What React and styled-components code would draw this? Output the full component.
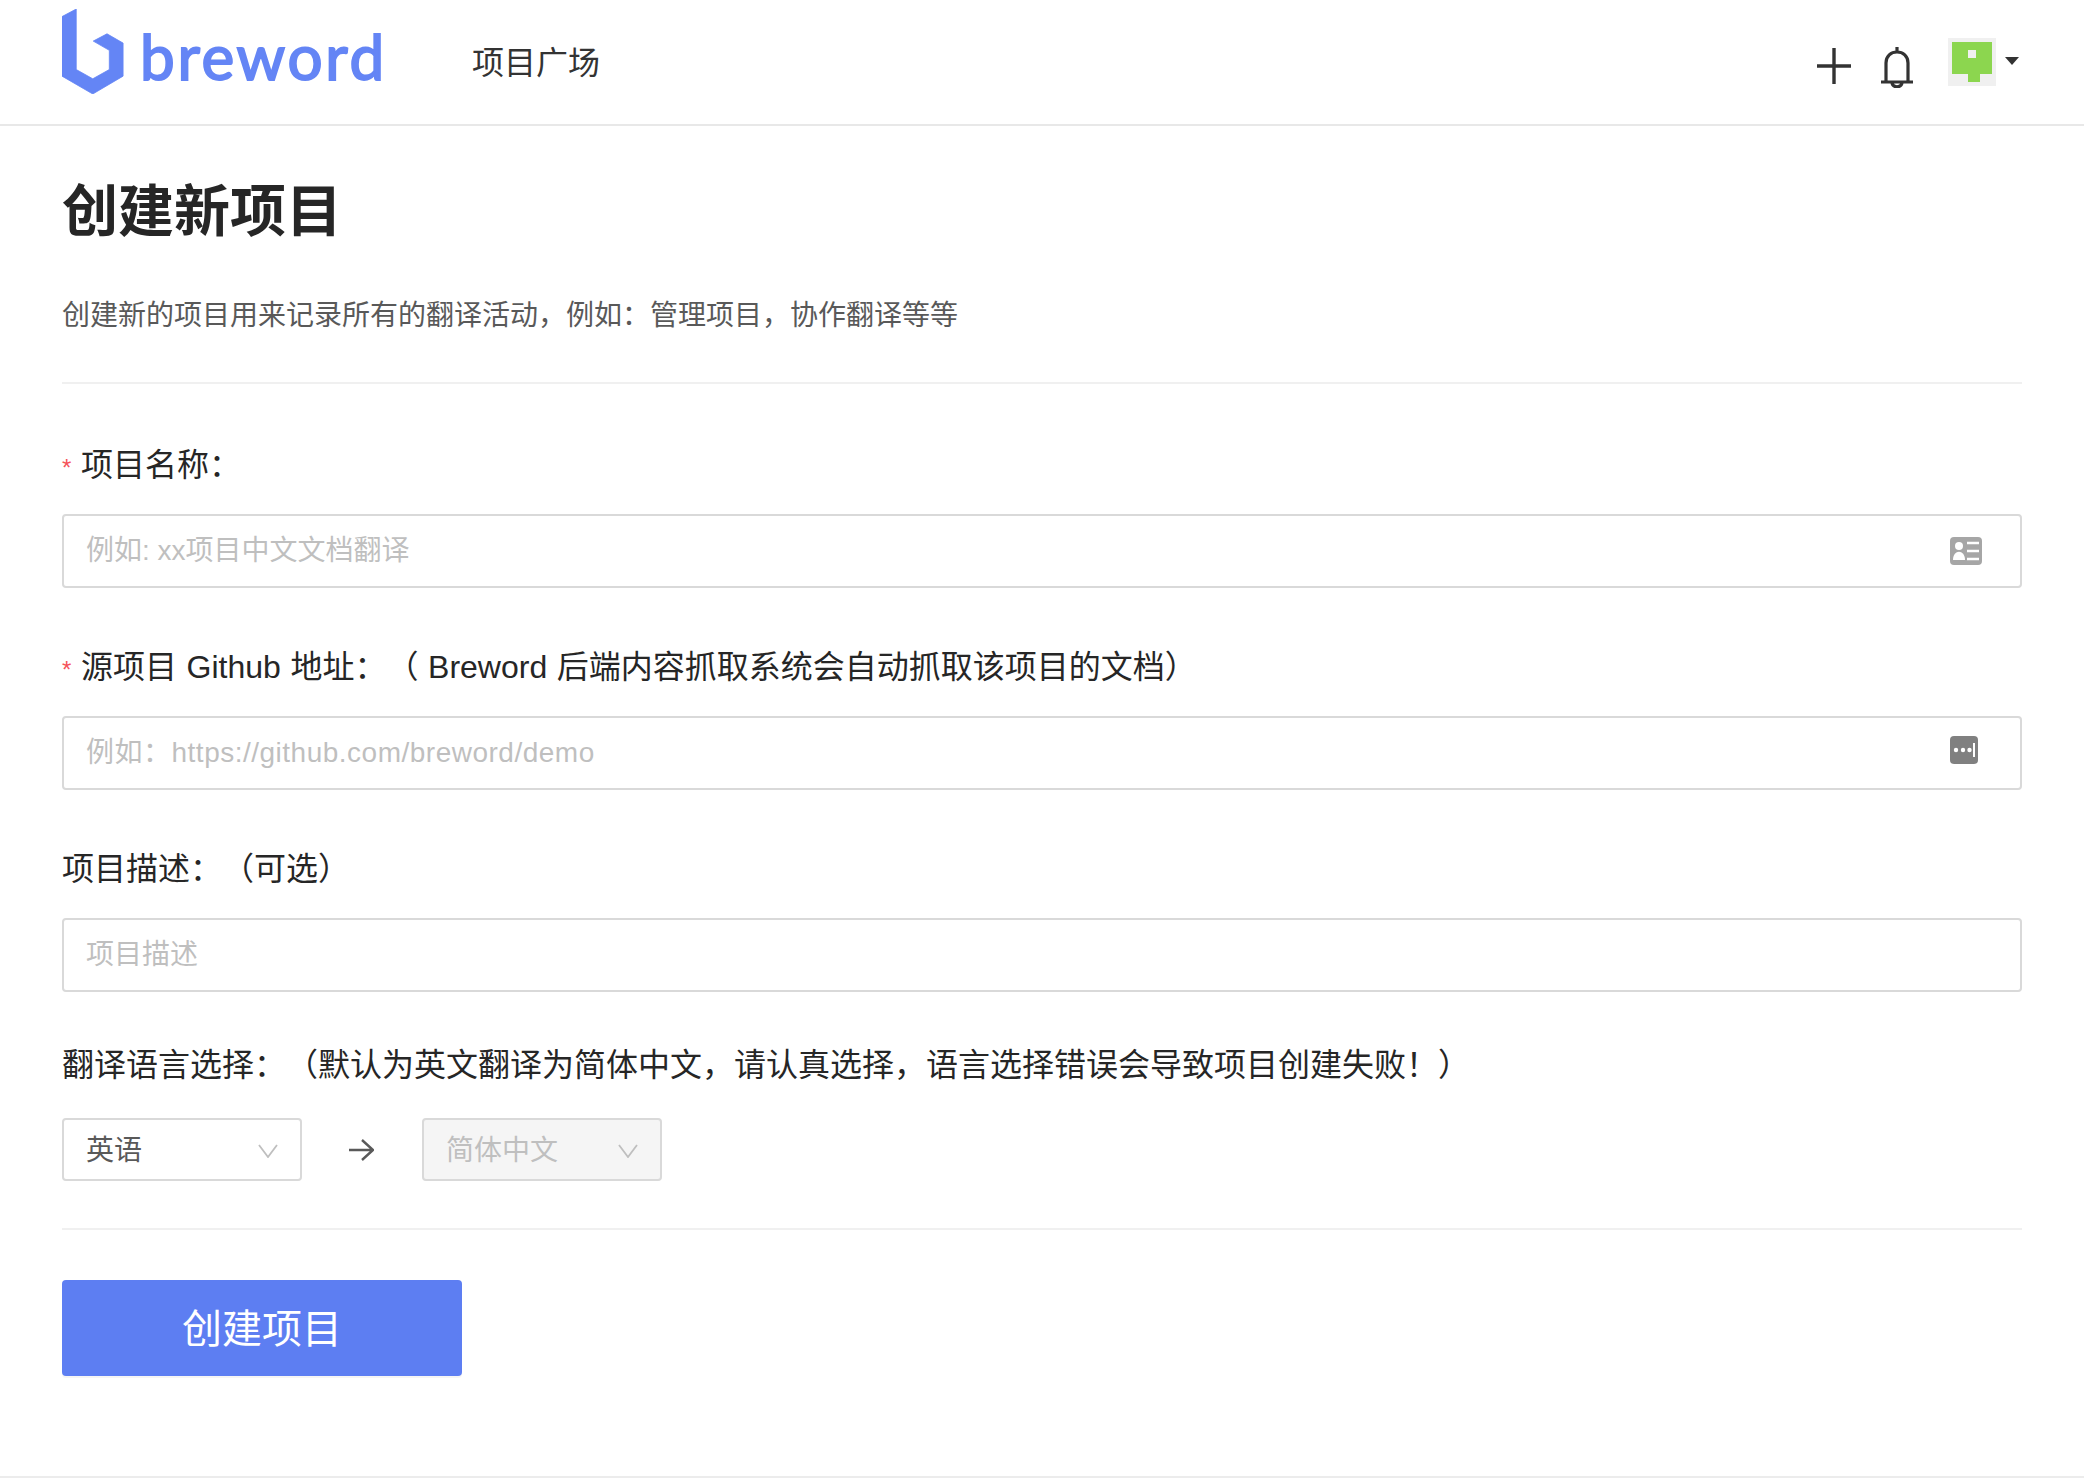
import React from "react";
import styled, { createGlobalStyle } from "styled-components";

const FONT = `"Liberation Sans", "Noto Sans CJK SC", sans-serif`;

const Global = createGlobalStyle`
  * { box-sizing: border-box; }
  html, body { margin: 0; padding: 0; background: #fff; }
  body { font-family: ${FONT}; color: #262626; }
`;

const Page = styled.div`
  width: 2084px;
  border-bottom: 2px solid #ececec;
`;

const Header = styled.header`
  height: 126px;
  padding: 0 62px;
  display: flex;
  align-items: flex-start;
  border-bottom: 2px solid #e8e8e8;
`;

const Brand = styled.div`
  display: flex;
  align-items: flex-start;
  gap: 16px;
  width: 410px;
  padding-top: 9px;
`;

const LogoMark = styled.svg`
  width: 62px;
  height: 85px;
  flex: none;
`;

const LogoText = styled.span`
  font-family: "Lato", sans-serif;
  font-size: 62px;
  font-weight: 400;
  line-height: 85px;
  margin-top: 5px;
  letter-spacing: 2.7px;
  color: #6485f5;
  -webkit-text-stroke: 1.9px #6485f5;
`;

const NavLink = styled.a`
  font-size: 32px;
  line-height: 44px;
  margin-top: 41px;
  color: #333;
`;

const Actions = styled.div`
  margin-left: auto;
  display: flex;
  align-items: flex-start;
  padding: 38px 3px 0 0;
`;

const ActionIcon = styled.svg`
  display: block;
  width: ${(p) => p.$w}px;
  height: ${(p) => p.$h}px;
  margin: ${(p) => p.$m};
  color: #333;
`;

const Avatar = styled.svg`
  display: block;
  width: 48px;
  height: 48px;
  margin-left: 35px;
`;

const Caret = styled.span`
  width: 0;
  height: 0;
  margin: 19px 0 0 9px;
  border-left: 7px solid transparent;
  border-right: 7px solid transparent;
  border-top: 8px solid #333;
`;

const Main = styled.main`
  padding: 0 62px;
`;

const Title = styled.h1`
  margin: 0;
  padding-top: 54px;
  font-size: 56px;
  line-height: 64px;
  font-weight: 600;
  color: #262626;
`;

const Intro = styled.p`
  margin: 0;
  padding: 52px 0 46px;
  font-size: 28px;
  line-height: 40px;
  color: #595959;
  border-bottom: 2px solid #f0f0f0;
`;

const Form = styled.form`
  display: block;
  padding-top: 59px;
`;

const Field = styled.div`
  margin-bottom: ${(p) => (p.$last ? 51 : 57)}px;
`;

const Label = styled.label`
  display: block;
  font-size: 32px;
  line-height: 44px;
  margin-bottom: ${(p) => (p.$gap ? p.$gap : 27)}px;
  color: #262626;
  white-space: nowrap;
  word-spacing: 0.7px;
  text-spacing-trim: space-all;
`;

const Required = styled.span`
  display: inline-block;
  width: 19px;
  color: #f5535a;
  font-size: 24px;
  line-height: 1;
`;

const InputWrap = styled.div`
  position: relative;
`;

const TextInput = styled.input`
  display: block;
  width: 100%;
  height: 74px;
  padding: 0 22px;
  border: 2px solid #d9d9d9;
  border-radius: 4px;
  font-family: ${FONT};
  font-size: 28px;
  color: #262626;
  outline: none;
  background: #fff;
  letter-spacing: ${(p) => p.$spacing || 0}px;

  &::placeholder {
    color: #bfbfbf;
    opacity: 1;
  }
`;

const InputIcon = styled.svg`
  position: absolute;
  left: ${(p) => p.$left}px;
  top: ${(p) => p.$top}px;
  height: 28px;
  width: ${(p) => p.$w}px;
`;

const LanguageRow = styled.div`
  display: flex;
  align-items: center;
`;

const LanguageSelect = styled.div`
  width: 240px;
  height: 63px;
  padding: 0 22px 3px;
  display: flex;
  align-items: center;
  justify-content: space-between;
  border: 2px solid #d9d9d9;
  border-radius: 4px;
  font-size: 28px;
  color: ${(p) => (p.$disabled ? "#bfbfbf" : "#595959")};
  background: ${(p) => (p.$disabled ? "#f5f5f5" : "#fff")};
`;

const Chevron = styled.svg`
  width: 20px;
  height: 14px;
  margin-top: 6px;
  color: #bfbfbf;
`;

const ArrowIcon = styled.svg`
  width: 25px;
  height: 22px;
  margin: 0 48px 0 47px;
  color: #595959;
`;

const Footer = styled.div`
  margin-top: 47px;
  padding-top: 50px;
  padding-bottom: 100px;
  border-top: 2px solid #f0f0f0;
`;

const SubmitButton = styled.button`
  display: block;
  width: 400px;
  height: 96px;
  padding: 0 0 5px;
  border: 0;
  border-radius: 4px;
  background: #5d7ef2;
  color: #fff;
  font-family: ${FONT};
  font-size: 40px;
  box-shadow: 0 2px 0 rgba(0, 0, 0, 0.04);
`;

export default function App() {
  return (
    <Page>
      <Global />
      <Header>
        <Brand>
          <LogoMark viewBox="0 0 135 257" preserveAspectRatio="none">
            <path
              d="M31 0 L0 23 V203 L67 257 L133 203 V103 L98 75 L68 97 L103 125 V183 L67 211 L31 183 Z"
              fill="#6485f5"
              stroke="#6485f5"
              strokeWidth="2"
              strokeLinejoin="round"
            />
          </LogoMark>
          <LogoText>breword</LogoText>
        </Brand>
        <NavLink>项目广场</NavLink>
        <Actions>
          <ActionIcon $w={34} $h={36} $m="10px 0 0 0" viewBox="0 0 34 36">
            <path d="M0 18 H34 M17 0 V36" stroke="currentColor" strokeWidth="3.4" fill="none" />
          </ActionIcon>
          <ActionIcon $w={32} $h={41} $m="9px 0 0 30px" viewBox="0 0 32 41">
            <path
              d="M0 35 H32 M5 35 V16 C5 9 10 5 16 5 C22 5 27 9 27 16 V35 M16 0 V5 M11 36 C12 41 20 41 21 36"
              stroke="currentColor"
              strokeWidth="3.2"
              fill="none"
            />
          </ActionIcon>
          <Avatar viewBox="0 0 48 48">
            <rect width="48" height="48" fill="#f0f0f0" />
            <path d="M4 4 H44 V36 H32 V44 H20 V36 H4 Z" fill="#8cd64f" />
            <rect x="20" y="12" width="8" height="8" fill="#f0f0f0" />
          </Avatar>
          <Caret />
        </Actions>
      </Header>
      <Main>
        <Title>创建新项目</Title>
        <Intro>创建新的项目用来记录所有的翻译活动，例如：管理项目，协作翻译等等</Intro>
        <Form>
          <Field>
            <Label>
              <Required>*</Required>项目名称：
            </Label>
            <InputWrap>
              <TextInput placeholder="例如: xx项目中文文档翻译" />
              <InputIcon $left={1888} $top={23} $w={32} viewBox="0 0 32 28">
                <rect width="32" height="28" rx="4" fill="#a6a6a6" />
                <circle cx="9" cy="9" r="4" fill="#fff" />
                <path d="M3 23 C3 12 15 12 15 23 Z" fill="#fff" />
                <path d="M17 6 H29 M17 14 H29 M17 22 H29" stroke="#fff" strokeWidth="2.4" />
              </InputIcon>
            </InputWrap>
          </Field>
          <Field>
            <Label>
              <Required>*</Required>源项目 Github 地址：（ Breword 后端内容抓取系统会自动抓取该项目的文档）
            </Label>
            <InputWrap>
              <TextInput $spacing={0.5} placeholder="例如：https://github.com/breword/demo" />
              <InputIcon $left={1888} $top={20} $w={28} viewBox="0 0 28 28">
                <rect width="28" height="28" rx="4" fill="#808080" />
                <circle cx="6" cy="14" r="2.2" fill="#fff" />
                <circle cx="13" cy="14" r="2.2" fill="#fff" />
                <circle cx="19.5" cy="14" r="2.2" fill="#fff" />
                <path d="M24 7 V21" stroke="#fff" strokeWidth="2" />
              </InputIcon>
            </InputWrap>
          </Field>
          <Field $last>
            <Label>项目描述：（可选）</Label>
            <InputWrap>
              <TextInput placeholder="项目描述" />
            </InputWrap>
          </Field>
          <Label $gap={31}>翻译语言选择：（默认为英文翻译为简体中文，请认真选择，语言选择错误会导致项目创建失败！）</Label>
          <LanguageRow>
            <LanguageSelect>
              英语
              <Chevron viewBox="0 0 20 14">
                <path d="M1 1 L10 13 L19 1" stroke="currentColor" strokeWidth="1.8" fill="none" />
              </Chevron>
            </LanguageSelect>
            <ArrowIcon viewBox="0 0 25 22">
              <path d="M0 11 H23 M13 1 L24 11 L13 21" stroke="currentColor" strokeWidth="2.4" fill="none" />
            </ArrowIcon>
            <LanguageSelect $disabled>
              简体中文
              <Chevron viewBox="0 0 20 14">
                <path d="M1 1 L10 13 L19 1" stroke="currentColor" strokeWidth="1.8" fill="none" />
              </Chevron>
            </LanguageSelect>
          </LanguageRow>
          <Footer>
            <SubmitButton type="button">创建项目</SubmitButton>
          </Footer>
        </Form>
      </Main>
    </Page>
  );
}
